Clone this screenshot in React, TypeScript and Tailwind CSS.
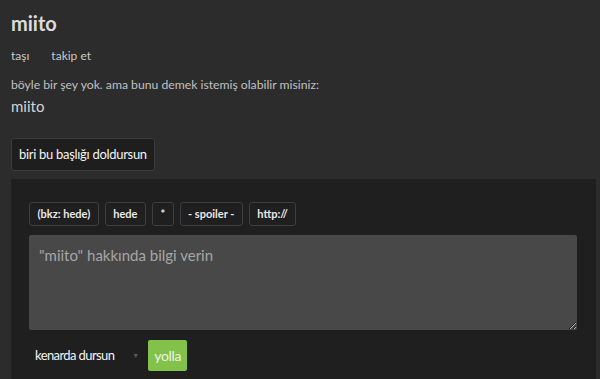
import React from "react";

export default function App() {
  const tools = ["(bkz: hede)", "hede", "*", "- spoiler -", "http://"];
  return (
    <div
      className="w-[600px] h-[379px] overflow-hidden bg-[#2c2c2c] text-[#d0d0d0]"
      style={{ fontFamily: "Lato, 'Open Sans', sans-serif" }}
    >
      <div className="pl-[11px] pr-[4px] pt-[10px]">
        <h1 className="text-[20px] font-bold leading-[26px] text-[#dcdcdc]">miito</h1>
        <div className="mt-[12px] flex gap-[22px] text-[12px] leading-[16px] text-[#c8c8c8]">
          <span>taşı</span>
          <span>takip et</span>
        </div>
        <p className="mt-[13px] text-[12.2px] leading-[16px] text-[#c0c0c0]">
          böyle bir şey yok. ama bunu demek istemiş olabilir misiniz:
        </p>
        <p className="mt-[3px] text-[15px] leading-[20px] text-[#d4d4d4]">miito</p>
        <button className="mt-[22px] h-[33px] px-[7px] rounded-[3px] border border-[#3c3c3c] bg-[#1e1e1e] text-[13px] tracking-[-0.3px] font-normal text-[#f4f4f4]">
          biri bu başlığı doldursun
        </button>
        <div className="mt-[8px] bg-[#1f1f1f] pl-[18px] pr-[19px] pt-[23px] pb-[20px]">
          <div className="flex gap-[6px]">
            {tools.map((t) => (
              <button
                key={t}
                className="h-[24px] px-[7.5px] rounded-[3px] border border-[#3e3e3e] bg-[#1f1f1f] text-[11px] font-bold text-[#e8e8e8]"
              >
                {t}
              </button>
            ))}
          </div>
          <textarea
            className="mt-[9px] block w-full h-[95px] resize-y rounded-[2px] bg-[#484848] px-[10px] py-[9px] text-[15px] text-[#d8d8d8] placeholder:text-[#a6a6a6] outline-none"
            placeholder={'"miito" hakkında bilgi verin'}
            style={{ fontFamily: "Lato, 'Open Sans', sans-serif" }}
          />
          <div className="mt-[10px] flex items-center">
            <span className="ml-[6px] text-[13px] tracking-[-0.6px] font-normal text-[#f4f4f4]">kenarda dursun</span>
            <span className="ml-[18px] text-[7px] text-[#5a5a5a]">▼</span>
            <button className="ml-[9px] h-[31px] px-[6px] rounded-[2px] bg-[#82c14a] text-[14px] tracking-[-0.3px] text-[#eef5e6]">
              yolla
            </button>
          </div>
        </div>
      </div>
    </div>
  );
}
